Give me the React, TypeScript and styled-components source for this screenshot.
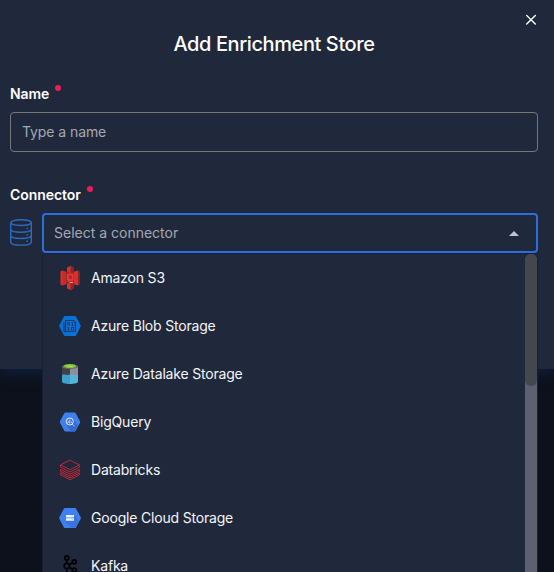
import React from "react";
import styled, { createGlobalStyle } from "styled-components";

const GlobalStyle = createGlobalStyle`
  * { box-sizing: border-box; }
  html, body { margin: 0; height: 100%; overflow: hidden; background: #0d111c; }
  body { font-family: Inter, "Liberation Sans", sans-serif; color: #fff; }
`;

const Page = styled.div`
  height: 572px;
  background: #0d111c;
`;

const Dialog = styled.section`
  display: flex;
  flex-direction: column;
  height: 369px;
  padding: 0 16px 0 10px;
  background: #20283c;
  box-shadow: 0 3px 15px #12233f;
`;

const TopBar = styled.header`
  display: flex;
  justify-content: flex-end;
  height: 32px;
  padding-top: 14px;
`;

const CloseButton = styled.button`
  display: flex;
  width: 12px;
  height: 12px;
  margin-right: 1px;
  padding: 0;
  border: 0;
  background: none;
`;

const Title = styled.h1`
  margin: 0;
  font-size: 20px;
  line-height: 24px;
  font-weight: 500;
  letter-spacing: -0.4px;
  text-align: center;
`;

const Field = styled.div<{ $top: number }>`
  display: flex;
  flex-direction: column;
  margin-top: ${(p) => p.$top}px;
`;

const Label = styled.label`
  display: flex;
  gap: 6px;
  height: 28px;
  font-size: 14px;
  line-height: 20px;
  font-weight: 600;
  letter-spacing: -0.05px;
`;

const RequiredDot = styled.span`
  width: 6px;
  height: 6px;
  margin-top: 1px;
  border-radius: 50%;
  background: #e91e55;
`;

const TextInput = styled.input`
  width: 528px;
  height: 40px;
  padding: 0 11px 1px;
  border: 1px solid #77777a;
  border-radius: 4px;
  background: transparent;
  color: #fff;
  font: 400 14px Inter, sans-serif;
  letter-spacing: -0.08px;
  outline: 0;
  &::placeholder { color: #a4a8b1; opacity: 1; }
`;

const ConnectorRow = styled.div`
  display: flex;
  align-items: flex-start;
  gap: 9px;
`;

const SelectWrap = styled.div`
  position: relative;
  width: 496px;
`;

const Select = styled.div`
  display: flex;
  align-items: center;
  justify-content: space-between;
  height: 40px;
  padding: 0 17px 0 10px;
  border: 2px solid #2b6fdc;
  border-radius: 4px;
  color: #a4a8b1;
  font-size: 14px;
  line-height: 18px;
`;

const Menu = styled.div`
  position: absolute;
  top: 40px;
  left: 0;
  display: flex;
  width: 496px;
  height: 319px;
  border: 1px solid #182039;
  border-bottom: 0;
  border-radius: 4px 4px 0 0;
  background: #20283c;
  overflow: hidden;
`;

const Options = styled.ul`
  flex: 1;
  margin: 0;
  padding: 0;
  list-style: none;
`;

const Option = styled.li`
  display: flex;
  align-items: center;
  gap: 9px;
  height: 48px;
  padding-left: 15px;
  font-size: 14px;
  line-height: 18px;
  letter-spacing: -0.19px;
  color: #f4f5f7;
`;

const ScrollTrack = styled.div`
  width: 12px;
  border-radius: 6px 6px 0 0;
  background: #5d6070;
`;

const ScrollThumb = styled.div`
  height: 132px;
  border-radius: 6px;
  background: #45474f;
`;

const Icon = ({ children }: { children: React.ReactNode }) => (
  <svg width="24" height="24" viewBox="0 0 24 24" fill="none">{children}</svg>
);

const S3Icon = () => (
  <Icon>
    <path d="M2.500 5.500 4.500 4.500 8 6v12l-3.500 1.500-2-1z" fill="#d9302f" />
    <path d="m4.500 4.500 3.500 1.200v12.600l-3.500 1.200z" fill="#c52b28" />
    <path d="M22 5.500 20 4.500 16 6v12l4 1.500 2-1z" fill="#842321" />
    <path d="m20 4.500-4 1.200v12.600l4 1.200z" fill="#d9302f" />
    <path d="M8 6h8v12H8z" fill="#9e2623" />
    <path d="m12.500 0 3 1.500v4.300L12.500 7 9 5.800V1.500z" fill="#d9302f" />
    <path d="m12.500 0 3 1.500v4.300L12.500 7z" fill="#8b2623" />
    <path d="M9 18 12.500 17l3 1v4.500l-3 1.500L9 22.500z" fill="#d9302f" />
    <path d="m12.500 17 3 1v4.500l-3 1.500z" fill="#8b2623" />
    <path d="m9 8 3.300-.8 3.200.8v6.400l-3.200.8L9 14.400z" fill="#df3a35" />
    <path d="M11 9.500h2.800v3.500H11z" fill="#a12a29" />
    <path d="m9.500 15.200 2.800.7 2.500-.2V17l-2.500-.3z" fill="#efb5ae" />
  </Icon>
);

const AzureBlobIcon = () => (
  <Icon>
    <path d="M7 2h10q.7 0 1 .6l4.600 8.600q.4.8 0 1.600L18 21.400q-.3.6-1 .6H7q-.7 0-1-.6l-4.600-8.600q-.4-.8 0-1.600L6 2.600Q6.300 2 7 2z" fill="#0871d3" />
    <path d="M7.500 6.500h7.900l2 2v9H7.500z" stroke="#123b6b" strokeWidth="1.100" />
    <path d="M6 8v9.800h1.500M9.500 8.600h2v2.400h-2zm4 0h1v2.700m-1 0h2M9.500 13.500h1v2.400m-1 0h2m2-2.400h2v2.400h-2z" stroke="#123b6b" />
  </Icon>
);

const DatalakeIcon = () => (
  <Icon>
    <path d="M4 4.500h8V14H4z" fill="#404346" />
    <path d="M12 4.500h8V14h-8z" fill="#8c8f96" />
    <path d="M4 13c3-1.500 5 .7 8-.4v9.400c-5 0-8-1-8-2.200z" fill="#3f9fcd" />
    <path d="M12 12.600c3-1 5.500 1.500 8 .2v7c0 1.200-3 2.200-8 2.200z" fill="#54b2dc" />
    <ellipse cx="12" cy="4.700" rx="8" ry="2.300" fill="#666b6d" />
    <ellipse cx="12" cy="4" rx="6.200" ry="2" fill="#80c638" />
    <ellipse cx="12" cy="4.200" rx="3.500" ry=".8" fill="#9edc55" />
  </Icon>
);

const Hexagon = ({ wide }: { wide?: boolean }) => (
  <path
    d={wide
      ? "M7 2h10q.7 0 1 .6l4.700 8.600q.4.8 0 1.600L18 21.400q-.3.6-1 .6H7q-.7 0-1-.6l-4.700-8.600q-.4-.8 0-1.600L6 2.600Q6.300 2 7 2z"
      : "M7.500 2.600h9q.8 0 1.200.7l4.300 7.900q.4.800 0 1.600l-4.300 7.900q-.4.700-1.200.7h-9q-.8 0-1.200-.7L2 12.800q-.4-.8 0-1.600l4.300-7.900q.4-.7 1.200-.7z"}
    fill="#4080ee"
  />
);

const BigQueryIcon = () => (
  <Icon>
    <Hexagon />
    <path d="m14.500 9 5.800 6.800-2.600 4.900q-.4.700-1.200.7h-4L8.500 15z" fill="#356bd0" />
    <circle cx="11.800" cy="11.500" r="3.500" stroke="#e4edff" strokeWidth="1" />
    <path d="M10.200 11.500v1.600m1.600-3v3.600m1.500-2.200v1.600m1.200 1.200 1.900 1.900" stroke="#e4edff" strokeWidth=".8" />
  </Icon>
);

const DatabricksIcon = () => (
  <Icon>
    <path d="m2.500 6.900 9.500-4.700 9.500 4.700-9.500 4.800zM2.500 11.500v1.800l9.500 4.900 9.500-4.900v-1.800L12 16.200l-9.500-4.700M2.500 15v1.800l9.500 4.900 9.500-4.900V15L12 19.900z" stroke="#b82a32" strokeWidth="1" strokeLinejoin="round" />
    <path d="M2.500 6.900v2.300l9.500 4.900 9.500-4.900V7.500" stroke="#b82a32" strokeWidth="1" strokeLinejoin="round" />
  </Icon>
);

const GcsIcon = () => (
  <Icon>
    <Hexagon wide />
    <path d="m17 9 4 5.500-3 6.900q-.3.600-1 .6h-4l-6-7z" fill="#3a73de" />
    <path d="M8 9h8v2.500H8zm0 3.200h8v2.600H8z" fill="#eaf1ff" />
    <path d="M13.500 10.200h1.500m-1.500 3.300h1.500" stroke="#a6c4fa" strokeWidth=".7" />
  </Icon>
);

const KafkaIcon = () => (
  <Icon>
    <g stroke="#020305" strokeWidth="1.700">
      <circle cx="8.800" cy="3.900" r="2" />
      <circle cx="8.800" cy="12" r="2.700" />
      <circle cx="8.800" cy="20.300" r="2" />
      <circle cx="16.300" cy="7.800" r="2" />
      <circle cx="16.300" cy="16.200" r="2" />
      <path d="M8.800 5.900v3.400m0 5.400v3.600m2.500-7.600 3.200-1.900m-3.200 4.500 3.200 1.900" />
    </g>
  </Icon>
);

const DatabaseMark = styled.svg`
  flex: none;
  margin-top: 5px;
`;

const DatabaseIcon = () => (
  <DatabaseMark width="23" height="28" viewBox="0 0 23 28" fill="none" stroke="#2c6abf" strokeWidth="1.400">
    <ellipse cx="11" cy="4.600" rx="10.300" ry="2.900" />
    <path d="M.7 4.600v19.300c0 4.300 20.600 4.300 20.600 0V4.600M.7 11c0 4.300 20.600 4.300 20.600 0M.7 17.300c0 4.300 20.600 4.300 20.600 0" />
    <path d="M16.500 10.600H18M16.500 17H18M16.500 23.200H18" strokeWidth="1.500" />
  </DatabaseMark>
);

const connectors = [
  { name: "Amazon S3", Mark: S3Icon },
  { name: "Azure Blob Storage", Mark: AzureBlobIcon },
  { name: "Azure Datalake Storage", Mark: DatalakeIcon },
  { name: "BigQuery", Mark: BigQueryIcon },
  { name: "Databricks", Mark: DatabricksIcon },
  { name: "Google Cloud Storage", Mark: GcsIcon },
  { name: "Kafka", Mark: KafkaIcon },
];

export default function App() {
  return (
    <Page>
      <GlobalStyle />
      <Dialog>
        <TopBar>
          <CloseButton aria-label="Close">
            <svg width="12" height="12" viewBox="0 0 12 12" stroke="#fff" strokeWidth="1.400" strokeLinecap="round">
              <path d="m1.700 1.500 8.600 8.600m0-8.600-8.600 8.600" />
            </svg>
          </CloseButton>
        </TopBar>
        <Title>Add Enrichment Store</Title>
        <Field $top={28}>
          <Label htmlFor="store-name">Name <RequiredDot /></Label>
          <TextInput id="store-name" placeholder="Type a name" />
        </Field>
        <Field $top={33}>
          <Label>Connector <RequiredDot /></Label>
          <ConnectorRow>
            <DatabaseIcon />
            <SelectWrap>
              <Select>
                Select a connector
                <svg width="10" height="5" viewBox="0 0 10 5"><path d="M0 5 5 0l5 5z" fill="#c0c3cc" /></svg>
              </Select>
              <Menu>
                <Options>
                  {connectors.map(({ name, Mark }) => (
                    <Option key={name}><Mark />{name}</Option>
                  ))}
                </Options>
                <ScrollTrack><ScrollThumb /></ScrollTrack>
              </Menu>
            </SelectWrap>
          </ConnectorRow>
        </Field>
      </Dialog>
    </Page>
  );
}
